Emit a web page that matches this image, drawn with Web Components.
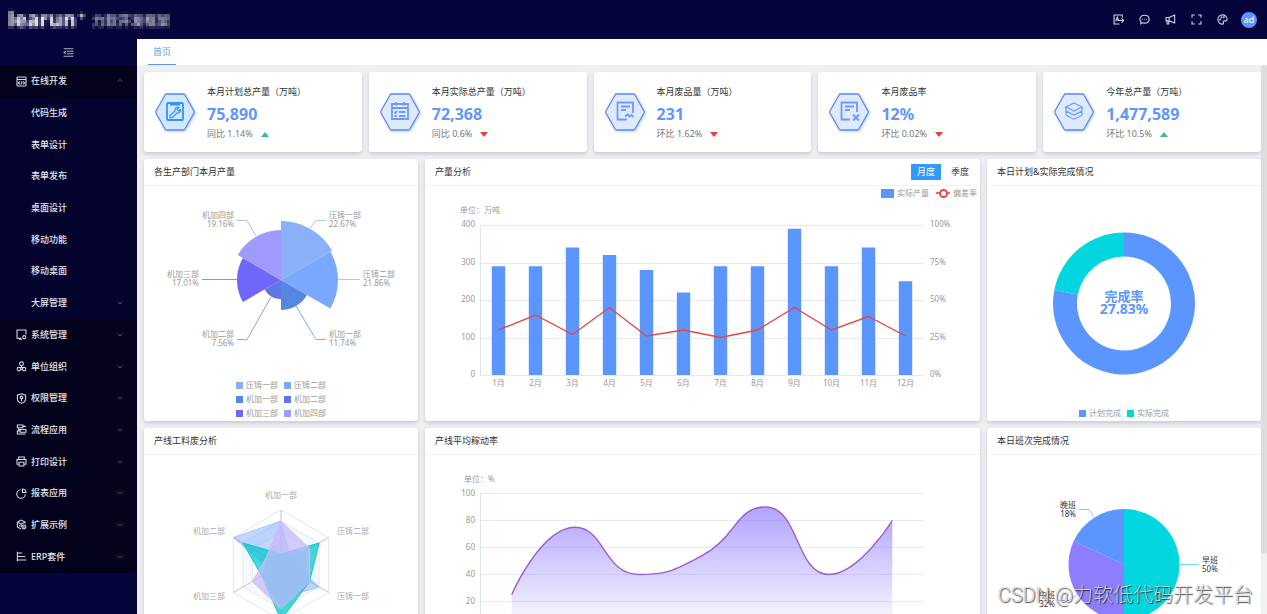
<!DOCTYPE html>
<html lang="zh-CN">
<head>
<meta charset="utf-8">
<title>首页</title>
<style>
  html, body { margin: 0; height: 100%; }
  body { font: 9px/20px "Noto Sans", "Noto Sans CJK SC", sans-serif; color: #333; overflow: hidden; }
</style>
</head>
<body>
<lr-app></lr-app>
<script>
const ICONS = {
  dev: '<rect x="1.5" y="1.5" width="13" height="13" rx="1"/><path d="M1.500 5h13M5.500 8l-2 2 2 2M10.500 8l2 2-2 2M8.800 7.500l-1.600 5"/>',
  system: '<path d="M14.500 8V1.500h-13v12h6M4 15h5"/><circle cx="12" cy="12" r="2.300"/><path d="M12 12h.1"/>',
  org: '<circle cx="8" cy="4" r="2.800"/><circle cx="4.200" cy="11.800" r="2.500"/><circle cx="11.800" cy="11.800" r="2.500"/><path d="M8 7v2.500M5.500 9.500h5M6.700 12h2.600"/>',
  shield: '<path d="M8 1.200l6 2v5c0 3.300-2.600 5.600-6 6.800-3.400-1.200-6-3.500-6-6.800v-5z"/><circle cx="8" cy="6.500" r="1.900"/><path d="M8 8.500v3.500"/>',
  flow: '<path d="M2 1.500h8v4H2zM10 3.500h4.500M4 5.500V8h10.500M6 8h8.500v4H6zM6 10H2v4.500h12"/>',
  print: '<path d="M4 5V1.500h8V5M4 12H1.500V5h13v7H12"/><path d="M4.500 9h7v5.500h-7z"/>',
  pie: '<path d="M7 2.500A6.200 6.200 0 1 0 13.500 9"/><path d="M9.500 1.500V6.500h5c0-3-2-5-5-5z"/>',
  box: '<path d="M13 6.500V4.500L7.500 1.500 2 4.500v7l5 3M2 4.500l5.500 3 5.500-3M7.500 7.500v4"/><circle cx="11.500" cy="11.500" r="2.800"/><path d="M5 9v2M11.500 10v3"/>',
  erp: '<path d="M2 1v14M2 3h7M2 8h11M2 13h13"/>',
  fold: '<path d="M1 2.500h14M6 6.200h9M6 9.800h9M1 13.500h14M4 6L1.500 8 4 10"/>',
  lang: '<path d="M13.500 5V1.500h-12v13h8M4 10.500l2.300-6 2.200 5.500M5 8.700h2.500M9 9.500h6M12.500 6.500l3 3-3 3"/>',
  chat: '<path d="M8 1.800c4 0 6.700 2.400 6.700 5.700S12 13.200 8 13.200c-1 0-1.800-.1-2.600-.4L2.500 14.200l.4-2.900C1.900 10.300 1.300 9 1.300 7.500 1.300 4.200 4 1.800 8 1.800z"/><path d="M4.600 7.600h1.200M7.400 7.600h1.200M10.200 7.600h1.200" stroke-width="1.700"/>',
  horn: '<path d="M1.500 5h4.500l8-3.500v11.500L6 10H1.500zM6 5v5M3 10v4.500h2.500V10"/>',
  full: '<path d="M1.500 5.500v-4h4M10.500 1.500h4v4M14.500 10.500v4h-4M5.500 14.500h-4v-4"/>',
  palette: '<path d="M8 1.300a6.700 6.700 0 1 0 0 13.400c1.500 0 1.700-1 1.300-2-.5-1.300 0-2.700 1.700-2.700h1.700c1.300 0 2-.8 2-2C14.700 4 11.500 1.300 8 1.300z"/><circle cx="4.500" cy="8" r=".6"/><circle cx="6.500" cy="4.800" r=".6"/><circle cx="10" cy="4.800" r=".6"/>',
  up: '<path d="M3 10l5-5 5 5"/>',
  down: '<path d="M3 5l5 5 5-5"/>'
};

const svg = name => `<svg viewBox="0 0 16 16" aria-hidden="true">${ICONS[name]}</svg>`;

class Base extends HTMLElement {
  constructor() { super(); this.attachShadow({ mode: 'open' }); }
  connectedCallback() { this.shadowRoot.innerHTML = this.view(); }
}

class LrHeader extends Base {
  view() {
    const tools = [['lang', '切换语言'], ['chat', '消息'], ['horn', '公告'], ['full', '全屏'], ['palette', '主题']];
    return `<style>
      :host { display: block; }
      header { display: flex; align-items: center; justify-content: space-between; height: 39px; padding: 0 10px 0 8px; background: #05053b; color: #fff; }
      .logo { display: block; width: 166px; height: 36px; overflow: visible; }
      .tools { display: flex; align-items: center; }
      button { display: grid; place-items: center; width: 26px; height: 26px; padding: 0; border: 0; background: none; color: #d2d2e8; }
      button svg { width: 11px; height: 11px; fill: none; stroke: currentColor; stroke-width: 1.6; }
      .user { width: 16px; height: 16px; margin-left: 6px; border-radius: 50%; background: #5b96ff; color: #fff; font: 9px/16px "Noto Sans", sans-serif; }
    </style>
    <header>
      <svg class="logo" viewBox="0 0 166 36" role="img" aria-label="learun">
        <filter id="mosaic" x="0" y="0" width="166" height="36" filterUnits="userSpaceOnUse" primitiveUnits="userSpaceOnUse">
          <feGaussianBlur stdDeviation="1" result="soft"/>
          <feFlood x="1" y="1" width="1" height="1"/>
          <feComposite x="0" y="0" width="3" height="3" in2="SourceGraphic" operator="over"/>
          <feTile x="0" y="0" width="166" height="36" result="dots"/>
          <feComposite in="soft" in2="dots" operator="in"/>
          <feMorphology operator="dilate" radius="1"/>
        </filter>
        <g fill="#fff" filter="url(#mosaic)" font-family="Noto Sans, Noto Sans CJK SC, sans-serif">
          <text x="0" y="25" font-size="21" font-weight="700">learun</text>
          <text x="70" y="18" font-size="13" font-weight="700">+</text>
          <text x="84" y="23" font-size="13" font-weight="500" opacity=".85">力软开发框架</text>
        </g>
      </svg>
      <div class="tools">
        ${tools.map(([i, t]) => `<button type="button" aria-label="${t}">${svg(i)}</button>`).join('')}
        <button type="button" class="user">ad</button>
      </div>
    </header>`;
  }
}

class LrMenuItem extends Base {
  view() {
    const icon = this.getAttribute('icon'), arrow = this.getAttribute('arrow');
    return `<style>
      :host { display: flex; background: #03032e; }
      :host([icon]) { background: #02021c; }
      a { flex: 1; display: grid; grid-template-columns: 10px 1fr 8px; column-gap: 5px; align-items: center; padding: 0 13px 1px 16px; color: #e6e6ee; font-weight: 500; text-decoration: none; }
      svg { display: block; width: 11px; height: 11px; fill: none; stroke: #d8d8e2; stroke-width: 1.6; }
      .arrow svg { width: 8px; height: 8px; stroke: #6c6c80; }
    </style>
    <a href="#"><span>${icon ? svg(icon) : ''}</span><span><slot></slot></span><span class="arrow">${arrow ? svg(arrow) : ''}</span></a>`;
  }
}

class LrSidebar extends Base {
  view() {
    const sub = ['代码生成', '表单设计', '表单发布', '桌面设计', '移动功能', '移动桌面'];
    const groups = [['system', '系统管理'], ['org', '单位组织'], ['shield', '权限管理'], ['flow', '流程应用'], ['print', '打印设计'], ['pie', '报表应用'], ['box', '扩展示例'], ['erp', 'ERP套件']];
    return `<style>
      :host { display: block; background: #05053b; }
      button { display: grid; place-items: center; width: 100%; height: 27px; padding: 0 0 1px; border: 0; background: none; }
      button svg { width: 11px; height: 11px; fill: none; stroke: #b0b0bc; stroke-width: 1.6; }
      nav { display: grid; grid-auto-rows: 1fr; height: 507px; }
    </style>
    <button type="button" aria-label="收起菜单">${svg('fold')}</button>
    <nav>
      <lr-menu-item icon="dev" arrow="up">在线开发</lr-menu-item>
      ${sub.map(t => `<lr-menu-item>${t}</lr-menu-item>`).join('')}
      <lr-menu-item arrow="down">大屏管理</lr-menu-item>
      ${groups.map(([i, t]) => `<lr-menu-item icon="${i}" arrow="down">${t}</lr-menu-item>`).join('')}
    </nav>`;
  }
}

const STAT_ICONS = {
  wrench: '<g stroke="#2f96ff"><rect x="13" y="12" width="16" height="17" rx="1"/><path d="M16 13.500h10" stroke-width="2"/><path d="M16 24.500l5-4.500c-.5-2.500 1.500-4.500 4-3.500l-2 2 1.500 1.500 2-1.500c.5 2.500-1.500 4-3.500 3.500l-4.500 4.500c-1.500 1-3.500-.5-2.500-2z" stroke-width="1.200"/></g>',
  calendar: '<path d="M13 13h16v15H13zM13 17h16M17 11v3.500M25 11v3.500M15.500 21l1 1 1.800-2M20 21h6.500M15.500 25h2.500M20 25h6.500"/>',
  wave: '<path d="M23 28.500h-9.500v-17H29V22M17 15.500h9M17 19h5M21 25.500l2.500-2 2 2 2-1.500 2 2"/>',
  cross: '<path d="M22 28.500h-8.500v-17H29V21M17 15.500h9M17 19h5M25 23.500l6 6M31 23.500l-6 6"/>',
  layers: '<g stroke-width="1.200"><path d="M21 12l8 4-8 4-8-4z"/><path d="M13 20.200l8 4 8-4M13 24.200l8 4 8-4M13 16v4l8 4 8-4v-4M13 20.500v3.500M29 20.500v3.500"/></g>'
};

class LrStat extends Base {
  view() {
    const a = n => this.getAttribute(n);
    return `<style>
      :host { display: flex; align-items: center; gap: 11px; padding: 9px 10px; background: #fff; border-radius: 3px; box-shadow: 0 2px 4px rgba(40, 44, 60, .2); }
      svg.hex { width: 42px; height: 42px; flex: none; fill: none; stroke: #6c9bff; stroke-width: 1.8; filter: drop-shadow(1px 1px 1px #b9d4ff); }
      h3, p { margin: 0; font-size: 9px; font-weight: 400; }
      h3 { line-height: 22px; }
      strong { display: block; font-size: 16px; line-height: 22px; color: #6096fc; }
      p { display: flex; align-items: center; gap: 8px; line-height: 18px; color: #777; }
      i { width: 0; height: 0; border: solid transparent; border-width: 0 4px 5px; border-bottom-color: #3dba86; }
      i.down { border-width: 5px 4px 0; border-top-color: #f23c3c; }
    </style>
    <svg class="hex" viewBox="0 0 42 42" aria-hidden="true">
      <path d="M12.500 3h17q1 0 1.500 1l9 16q.5 1 0 2l-9 16q-.5 1-1.500 1h-17q-1 0-1.500-1l-9-16q-.5-1 0-2l9-16q.5-1 1.500-1z" fill="${a('icon') === 'wrench' ? '#d3e7ff' : '#dfe9ff'}" stroke="#5b86f8" stroke-width="1.300"/>
      ${STAT_ICONS[a('icon')]}
    </svg>
    <div><h3><slot></slot></h3><strong>${a('value')}</strong><p><span>${a('rate')}</span><i class="${a('trend')}"></i></p></div>`;
  }
}

class LrPanel extends Base {
  view() {
    return `<style>
      :host { display: block; background: #fff; border-radius: 3px; box-shadow: 0 2px 4px rgba(40, 44, 60, .2); min-width: 0; }
      header { display: flex; align-items: center; justify-content: space-between; height: 27px; padding: 0 5px 0 10px; border-bottom: 1px solid #f1f2f5; box-sizing: border-box; }
      h2 { margin: 0; font-size: 9px; font-weight: 400; }
    </style>
    <header><h2>${this.getAttribute('heading')}</h2><slot name="actions"></slot></header>
    <slot></slot>`;
  }
}

class LrPeriod extends Base {
  view() {
    return `<style>
      :host { display: flex; gap: 4px; }
      button { width: 30px; height: 16px; padding: 0; border: 0; background: none; color: #444; font: inherit; line-height: 16px; }
      button[aria-pressed="true"] { background: #3399ff; color: #fff; }
    </style>
    <button type="button" aria-pressed="true">月度</button><button type="button" aria-pressed="false">季度</button>`;
  }
}

class LrLegend extends Base {
  view() {
    const items = this.getAttribute('items').split(',').map(s => s.split(':'));
    return `<style>
      :host { display: grid; grid-template-columns: repeat(2, max-content); justify-content: center; column-gap: 6px; padding-bottom: 1px; font-size: 8px; line-height: 14px; color: #999; }
      span { display: flex; align-items: center; gap: 3px; }
      i { width: 7px; height: 7px; }
    </style>${items.map(([t, c]) => `<span><i style="background:${c}"></i>${t}</span>`).join('')}`;
  }
}

const CHART_CSS = `
  :host { display: flex; flex-direction: column; height: 235px; }
  svg { display: block; width: 100%; flex: 1; min-height: 0; overflow: visible; }
  text { font-size: 8px; fill: #999; }
`;
const polar = (cx, cy, r, deg) => {
  const t = (deg - 90) * Math.PI / 180;
  return [cx + r * Math.cos(t), cy + r * Math.sin(t)];
};
const sector = (cx, cy, r, a0, a1, fill, inner = 0) => {
  const big = a1 - a0 > 180 ? 1 : 0, p = polar(cx, cy, r, a0), q = polar(cx, cy, r, a1);
  const u = polar(cx, cy, inner, a1), v = polar(cx, cy, inner, a0);
  const back = inner ? `L${u}A${inner} ${inner} 0 ${big} 0 ${v}` : `L${cx} ${cy}`;
  return `<path d="M${p}A${r} ${r} 0 ${big} 1 ${q}${back}Z" fill="${fill}"/>`;
};
const callout = (points, color, x, y, anchor, name, pct) =>
  `<polyline points="${points}" fill="none" stroke="${color}"/><text x="${x}" y="${y}" text-anchor="${anchor}">${name}</text><text x="${x}" y="${y + 9}" text-anchor="${anchor}">${pct}</text>`;

class LrRose extends Base {
  view() {
    const data = [[59, '#8ab0f8'], [57, '#7ba8ff'], [30, '#5587e0'], [19, '#5f76e8'], [44, '#6e67fa'], [50, '#9f9afc']];
    return `<style>${CHART_CSS}</style>
    <svg viewBox="0 1 274 192">
      ${data.map(([r, c], i) => sector(137, 95, r, i * 60, i * 60 + 60, c)).join('')}
      ${callout('166,43 172,35.5 182,35.5', '#a9c6ff', 185, 33, 'start', '压铸一部', '22.67%')}
      ${callout('194,94.500 216,94.500', '#a9c6ff', 219, 92, 'start', '压铸二部', '21.86%')}
      ${callout('152,121 172,154.500 182,154.500', '#86a9e8', 185, 152, 'start', '机加一部', '11.74%')}
      ${callout('127,112 103,154.500 93,154.500', '#8e9df0', 90, 152, 'end', '机加二部', '7.56%')}
      ${callout('93,94.500 58,94.500', '#8f89fb', 55, 92, 'end', '机加三部', '17.01%')}
      ${callout('112,51 103,35.500 93,35.500', '#bbb7fd', 90, 33, 'end', '机加四部', '19.16%')}
    </svg>
    <lr-legend items="压铸一部:#8ab0f8,压铸二部:#7ba8ff,机加一部:#5587e0,机加二部:#5f76e8,机加三部:#6e67fa,机加四部:#9f9afc"></lr-legend>`;
  }
}

class LrRing extends Base {
  view() {
    return `<style>${CHART_CSS} .name, .rate { font-weight: 700; fill: #5b96ff; } .name { font-size: 13px; } .rate { font-size: 14px; }</style>
    <svg viewBox="0 1 274 220">
      ${sector(137, 118.5, 71, 0, 281, '#5b96ff', 47)}${sector(137, 118.5, 71, 281, 360, '#02d7e0', 47)}
      <text class="name" x="137" y="116" text-anchor="middle">完成率</text>
      <text class="rate" x="137" y="129" text-anchor="middle">27.83%</text>
    </svg>
    <lr-legend items="计划完成:#5b96ff,实际完成:#02d7e0"></lr-legend>`;
  }
}

class LrPie extends Base {
  view() {
    return `<style>${CHART_CSS} text { fill: #333; }</style>
    <svg viewBox="0 1 274 235">
      ${sector(137, 110.5, 55.5, 0, 180, '#02d7e0')}${sector(137, 110.5, 55.5, 180, 295, '#8c7eff')}${sector(137, 110.5, 55.5, 295, 360, '#5b96ff')}
      ${callout('193,110.500 212,110.500', '#5ee6ec', 215, 109, 'start', '早班', '50%')}
      ${callout('90,141 82,146.500 72,146.500', '#b6adff', 68, 144, 'end', '中班', '32%')}
      ${callout('107,63 102,55.500 92,55.500', '#9cc0ff', 89, 54, 'end', '晚班', '18%')}
    </svg>`;
  }
}

class LrRadar extends Base {
  view() {
    const cx = 137, cy = 111, R = 55;
    const poly = v => v.map((k, i) => polar(cx, cy, R * k, i * 60)).join(' ');
    const rings = [1, .8, .6, .4, .2].map((k, i) => `<polygon points="${poly(Array(6).fill(k))}" fill="${i % 2 ? '#f7f8fc' : '#fff'}" stroke="#e3e7f4"/>`).join('');
    const spokes = [0, 1, 2, 3, 4, 5].map(i => { const p = polar(cx, cy, R, i * 60); return `<line x1="${cx}" y1="${cy}" x2="${p[0]}" y2="${p[1]}" stroke="#c4c4c8"/>`; }).join('');
    return `<style>${CHART_CSS} text { fill: #aaa; }</style>
    <svg viewBox="0 1 274 235">
      ${rings}${spokes}
      <polygon points="${poly([.8, .2, .8, .6, .2, 1])}" fill="#5b96ff" fill-opacity=".38" stroke="#a9c6ff"/>
      <polygon points="${poly([.2, .8, .6, 1, .4, .8])}" fill="#00c8cd" fill-opacity=".72" stroke="#12c5cb"/>
      <polygon points="${poly([.8, .6, .6, .8, .6, .3])}" fill="#c5b8fb" fill-opacity=".75" stroke="#cfbdf5"/>
      <polygon points="${poly([.2, .5, .6, .8, .4, .28])}" fill="#93bff0" fill-opacity=".75"/>
      <text x="137" y="44" text-anchor="middle">机加一部</text>
      <text x="193" y="80">压铸二部</text><text x="193" y="145">压铸一部</text>
      <text x="81" y="80" text-anchor="end">机加二部</text><text x="81" y="145" text-anchor="end">机加三部</text>
      <text x="137" y="184" text-anchor="middle">机加四部</text>
    </svg>`;
  }
}

/* Axis charts redraw with the width that the panel gives them. */
class AxisChart extends Base {
  connectedCallback() {
    super.connectedCallback();
    this.plot = this.shadowRoot.querySelector('.plot');
    this.watch = new ResizeObserver(() => this.draw());
    this.watch.observe(this);
    this.draw();
  }
  disconnectedCallback() { this.watch.disconnect(); }
  draw() {
    const w = this.clientWidth || 555;
    this.plot.innerHTML = this.chart(55, w - 56);
  }
}

class LrCombo extends AxisChart {
  view() {
    return `<style>${CHART_CSS}
      .key { display: flex; justify-content: flex-end; align-items: center; gap: 7px; padding-right: 3px; font-size: 8px; line-height: 14px; color: #999; }
      .key span { display: flex; align-items: center; gap: 3px; }
      .bar { width: 13px; height: 9px; background: #5b96ff; }
      .line { display: grid; place-items: center; width: 14px; height: 9px; background: linear-gradient(#e86a6a, #e86a6a) center / 14px 2px no-repeat; }
      .line::before { content: ""; width: 5px; height: 5px; border: 2px solid #e64545; border-radius: 50%; background: #fff; }
    </style>
    <div class="key"><span><i class="bar"></i>实际产量</span><span><i class="line"></i>偏差率</span></div>
    <svg class="plot"></svg>`;
  }
  chart(l, r) {
    const top = 25, h = 150, n = 12, step = (r - l) / n;
    const bars = [290, 290, 340, 320, 280, 220, 290, 290, 390, 290, 340, 250];
    const rate = [30, 40, 27, 45, 26, 30, 25, 30, 45, 30, 39, 26];
    let s = `<text x="${l - 20}" y="13">单位：万吨</text>`;
    for (let i = 0; i <= 4; i++) {
      const y = Math.round(top + h * i / 4);
      s += `<path d="M${l} ${y + .5}H${r}" stroke="#e6e9f0"/><text x="${l - 5}" y="${y + 2}" text-anchor="end">${400 - i * 100}</text><text x="${r + 6}" y="${y + 2}">${100 - i * 25}%</text>`;
    }
    s += `<path d="M${l + .5} ${top}V${top + h}" stroke="#e0e6f1"/>`;
    bars.forEach((v, i) => {
      const c = l + step * (i + .5), bh = h * v / 400;
      s += `<rect x="${c - 6.7}" y="${top + h - bh}" width="13.4" height="${bh}" fill="#5b96ff"/><text x="${c}" y="${top + h + 11}" text-anchor="middle">${i + 1}月</text>`;
    });
    return s + `<polyline points="${rate.map((v, i) => [l + step * (i + .5), top + h - h * v / 100]).join(' ')}" fill="none" stroke="#e64545" stroke-width="1.400"/>`;
  }
}

/* Cubic path through the points, with handles kept between neighbouring points. */
function smoothPath(pts, k) {
  const mid = (v, a, b) => Math.min(Math.max(v, Math.min(a, b)), Math.max(a, b));
  let d = `M${pts[0]}`, c0 = pts[0];
  for (let i = 1; i < pts.length; i++) {
    const [x, y] = pts[i], p = pts[i - 1], q = pts[i + 1];
    if (!q) { d += `C${c0} ${x},${y} ${x},${y}`; break; }
    const lp = Math.hypot(x - p[0], y - p[1]), ln = Math.hypot(q[0] - x, q[1] - y), t = ln / (ln + lp);
    let nx = mid(x + (q[0] - p[0]) * k * t, x, q[0]), ny = mid(y + (q[1] - p[1]) * k * t, y, q[1]);
    const cx = mid(x - (nx - x) * lp / ln, p[0], x), cy = mid(y - (ny - y) * lp / ln, p[1], y);
    nx = x + (x - cx) * ln / lp; ny = y + (y - cy) * ln / lp;
    d += `C${c0} ${cx},${cy} ${x},${y}`;
    c0 = [nx, ny];
  }
  return d;
}

class LrArea extends AxisChart {
  view() { return `<style>${CHART_CSS}</style><svg class="plot"></svg>`; }
  chart(l, r) {
    const top = 38, h = 135, v = [25, 75, 40, 54, 90, 40, 80], step = (r - l) / v.length;
    let s = `<defs><linearGradient id="fade" x1="0" y1="0" x2="0" y2="1"><stop offset="0" stop-color="#8470fb" stop-opacity=".64"/><stop offset="1" stop-color="#8470fb" stop-opacity=".03"/></linearGradient></defs><text x="${l - 16}" y="27">单位：%</text>`;
    for (let i = 0; i <= 5; i++) {
      const y = top + h * i / 5;
      s += `<path d="M${l} ${y + .5}H${r}" stroke="#e6e9f4"/><text x="${l - 5}" y="${y + 3}" text-anchor="end">${100 - i * 20}</text>`;
    }
    s += `<path d="M${l + .5} ${top}V${top + h}" stroke="#e0e6f1"/>`;
    const pts = v.map((n, i) => [l + step * (i + .5), top + h - h * n / 100 + .5]);
    const d = smoothPath(pts, .5);
    return s + `<path d="${d}L${pts[6][0]} ${top + h}H${pts[0][0]}Z" fill="url(#fade)"/><path d="${d}" fill="none" stroke="#9a60c6" stroke-width="1.400"/>`;
  }
}

class LrApp extends Base {
  view() {
    return `<style>
      :host { display: grid; grid-template: auto minmax(0, 1fr) / 137px minmax(0, 1fr); height: 100vh; overflow: hidden; }
      lr-header { grid-column: 1 / -1; }
      .page { display: flex; flex-direction: column; min-height: 0; background: #eff0f4; }
      .tabs { flex: none; display: flex; height: 26px; padding-left: 11px; background: #fff; }
      .tabs a { padding: 0 5px; border-bottom: 1px solid #5b96ff; color: #5b96ff; line-height: 25px; text-decoration: none; }
      .scroll { flex: 1; display: flex; min-height: 0; }
      main { flex: 1; display: flex; flex-direction: column; gap: 7px; min-width: 0; padding: 7px 0 7px 7px; overflow: hidden; }
      .stats { display: grid; grid-template-columns: repeat(5, minmax(0, 1fr)); gap: 7px; }
      .charts { display: grid; grid-template-columns: repeat(4, minmax(0, 1fr)); gap: 7px; }
      .wide { grid-column: span 2; }
      .rail { width: 6px; }
      .rail i { display: block; height: 89%; border-radius: 3px; background: #dcdcde; }
      .mark { position: absolute; right: 14px; bottom: 4px; font: 300 20px/30px Roboto, "Noto Sans CJK SC", sans-serif; color: rgba(255, 255, 255, .75); text-shadow: 1px 1px 1px rgba(0, 0, 0, .7), 0 0 1px rgba(0, 0, 0, .4); white-space: nowrap; pointer-events: none; }
    </style>
    <lr-header></lr-header>
    <lr-sidebar></lr-sidebar>
    <div class="page">
      <div class="tabs"><a href="#">首页</a></div>
      <div class="scroll">
        <main>
          <section class="stats">
            <lr-stat icon="wrench" value="75,890" rate="同比 1.14%" trend="up">本月计划总产量（万吨）</lr-stat>
            <lr-stat icon="calendar" value="72,368" rate="同比 0.6%" trend="down">本月实际总产量（万吨）</lr-stat>
            <lr-stat icon="wave" value="231" rate="环比 1.62%" trend="down">本月废品量（万吨）</lr-stat>
            <lr-stat icon="cross" value="12%" rate="环比 0.02%" trend="down">本月废品率</lr-stat>
            <lr-stat icon="layers" value="1,477,589" rate="环比 10.5%" trend="up">今年总产量（万吨）</lr-stat>
          </section>
          <section class="charts">
            <lr-panel heading="各生产部门本月产量"><lr-rose></lr-rose></lr-panel>
            <lr-panel class="wide" heading="产量分析"><lr-period slot="actions"></lr-period><lr-combo></lr-combo></lr-panel>
            <lr-panel heading="本日计划&amp;实际完成情况"><lr-ring></lr-ring></lr-panel>
            <lr-panel heading="产线工料废分析"><lr-radar></lr-radar></lr-panel>
            <lr-panel class="wide" heading="产线平均稼动率"><lr-area></lr-area></lr-panel>
            <lr-panel heading="本日班次完成情况"><lr-pie></lr-pie></lr-panel>
          </section>
        </main>
        <div class="rail"><i></i></div>
      </div>
    </div>
    <div class="mark">CSDN @力软低代码开发平台</div>`;
  }
}

for (const [tag, cls] of Object.entries({
  'lr-header': LrHeader, 'lr-menu-item': LrMenuItem, 'lr-sidebar': LrSidebar, 'lr-stat': LrStat, 'lr-panel': LrPanel,
  'lr-period': LrPeriod, 'lr-legend': LrLegend, 'lr-rose': LrRose, 'lr-ring': LrRing, 'lr-pie': LrPie,
  'lr-radar': LrRadar, 'lr-combo': LrCombo, 'lr-area': LrArea, 'lr-app': LrApp
})) customElements.define(tag, cls);
</script>
</body>
</html>
